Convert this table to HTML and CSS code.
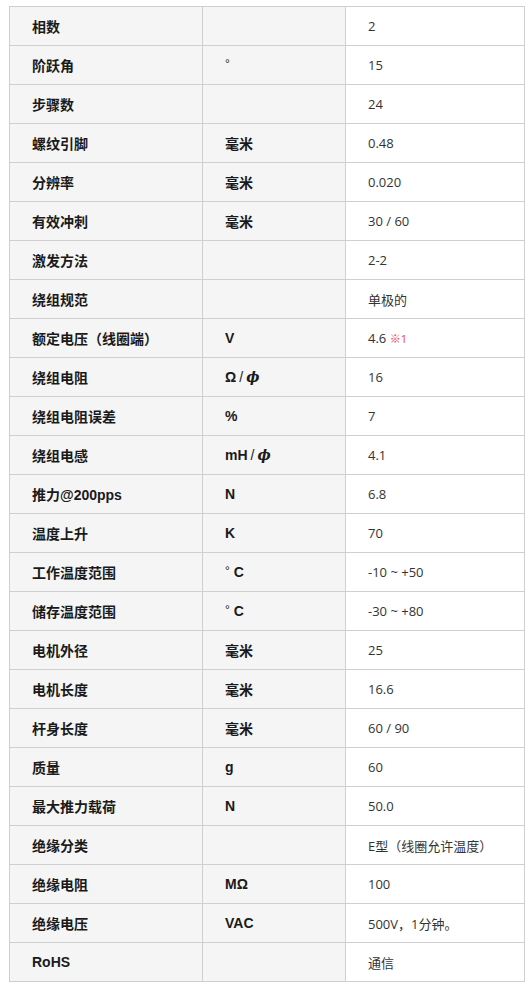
FILE: index.html
```html
<!DOCTYPE html>
<html lang="zh">
<head>
<meta charset="utf-8">
<link rel="stylesheet" href="styles.css">
</head>
<body>
<table class="spec">
<colgroup><col class="c1"><col class="c2"><col class="c3"></colgroup>
<tbody>
<tr><th>相数</th><td class="unit"></td><td class="val">2</td></tr>
<tr><th>阶跃角</th><td class="unit"><span class="deg">°</span></td><td class="val">15</td></tr>
<tr><th>步骤数</th><td class="unit"></td><td class="val">24</td></tr>
<tr><th>螺纹引脚</th><td class="unit">毫米</td><td class="val">0.48</td></tr>
<tr><th>分辨率</th><td class="unit">毫米</td><td class="val">0.020</td></tr>
<tr><th>有效冲刺</th><td class="unit">毫米</td><td class="val">30 / 60</td></tr>
<tr><th>激发方法</th><td class="unit"></td><td class="val">2-2</td></tr>
<tr><th>绕组规范</th><td class="unit"></td><td class="val">单极的</td></tr>
<tr><th>额定电压（线圈端）</th><td class="unit">V</td><td class="val">4.6 <span class="note">※1</span></td></tr>
<tr><th>绕组电阻</th><td class="unit">Ω<span class="sl">/</span><i class="phi">ϕ</i></td><td class="val">16</td></tr>
<tr><th>绕组电阻误差</th><td class="unit">%</td><td class="val">7</td></tr>
<tr><th>绕组电感</th><td class="unit">mH<span class="sl">/</span><i class="phi">ϕ</i></td><td class="val">4.1</td></tr>
<tr><th>推力@200pps</th><td class="unit">N</td><td class="val">6.8</td></tr>
<tr><th>温度上升</th><td class="unit">K</td><td class="val">70</td></tr>
<tr><th>工作温度范围</th><td class="unit"><span class="deg">°</span> C</td><td class="val">-10 ~ +50</td></tr>
<tr><th>储存温度范围</th><td class="unit"><span class="deg">°</span> C</td><td class="val">-30 ~ +80</td></tr>
<tr><th>电机外径</th><td class="unit">毫米</td><td class="val">25</td></tr>
<tr><th>电机长度</th><td class="unit">毫米</td><td class="val">16.6</td></tr>
<tr><th>杆身长度</th><td class="unit">毫米</td><td class="val">60 / 90</td></tr>
<tr><th>质量</th><td class="unit">g</td><td class="val">60</td></tr>
<tr><th>最大推力载荷</th><td class="unit">N</td><td class="val">50.0</td></tr>
<tr><th>绝缘分类</th><td class="unit"></td><td class="val">E型（线圈允许温度）</td></tr>
<tr><th>绝缘电阻</th><td class="unit">MΩ</td><td class="val">100</td></tr>
<tr><th>绝缘电压</th><td class="unit">VAC</td><td class="val">500V，1分钟。</td></tr>
<tr><th>RoHS</th><td class="unit"></td><td class="val">通信</td></tr>
</tbody>
</table>
</body>
</html>
```
FILE: styles.css
```css
html, body {
  margin: 0;
  padding: 0;
  background: #fff;
}
body {
  padding: 6px 9px 0 9px;
  font-family: "Liberation Sans", "Noto Sans CJK SC", sans-serif;
  color: #222;
}
.spec {
  border-collapse: collapse;
  table-layout: fixed;
  width: 515px;
}
.c1 { width: 193px; }
.c2 { width: 143px; }
.c3 { width: 179px; }
.spec th, .spec td {
  border: 1px solid #cfcfcf;
  height: 39px;
  padding: 0 0 0 22px;
  text-align: left;
  vertical-align: middle;
  box-sizing: border-box;
  white-space: nowrap;
}
.spec th {
  background: #f5f5f5;
  font-weight: bold;
  font-size: 14px;
  color: #1a1a1a;
}
.spec td.unit {
  background: #f5f5f5;
  font-weight: bold;
  font-size: 14px;
  color: #1a1a1a;
}
.spec td.val {
  background: #fff;
  font-family: "Open Sans", "Noto Sans CJK JP", "Noto Sans CJK SC", sans-serif;
  font-size: 13px;
  color: #333;
}
.sl {
  font-weight: normal;
  margin: 0 3px;
}
.phi {
  font-family: "DejaVu Serif", serif;
  font-style: italic;
}
.deg {
  font-weight: normal;
  font-size: 12px;
  position: relative;
  top: -2px;
}
.note {
  color: #f03c4a;
  font-size: 11px;
}
```
